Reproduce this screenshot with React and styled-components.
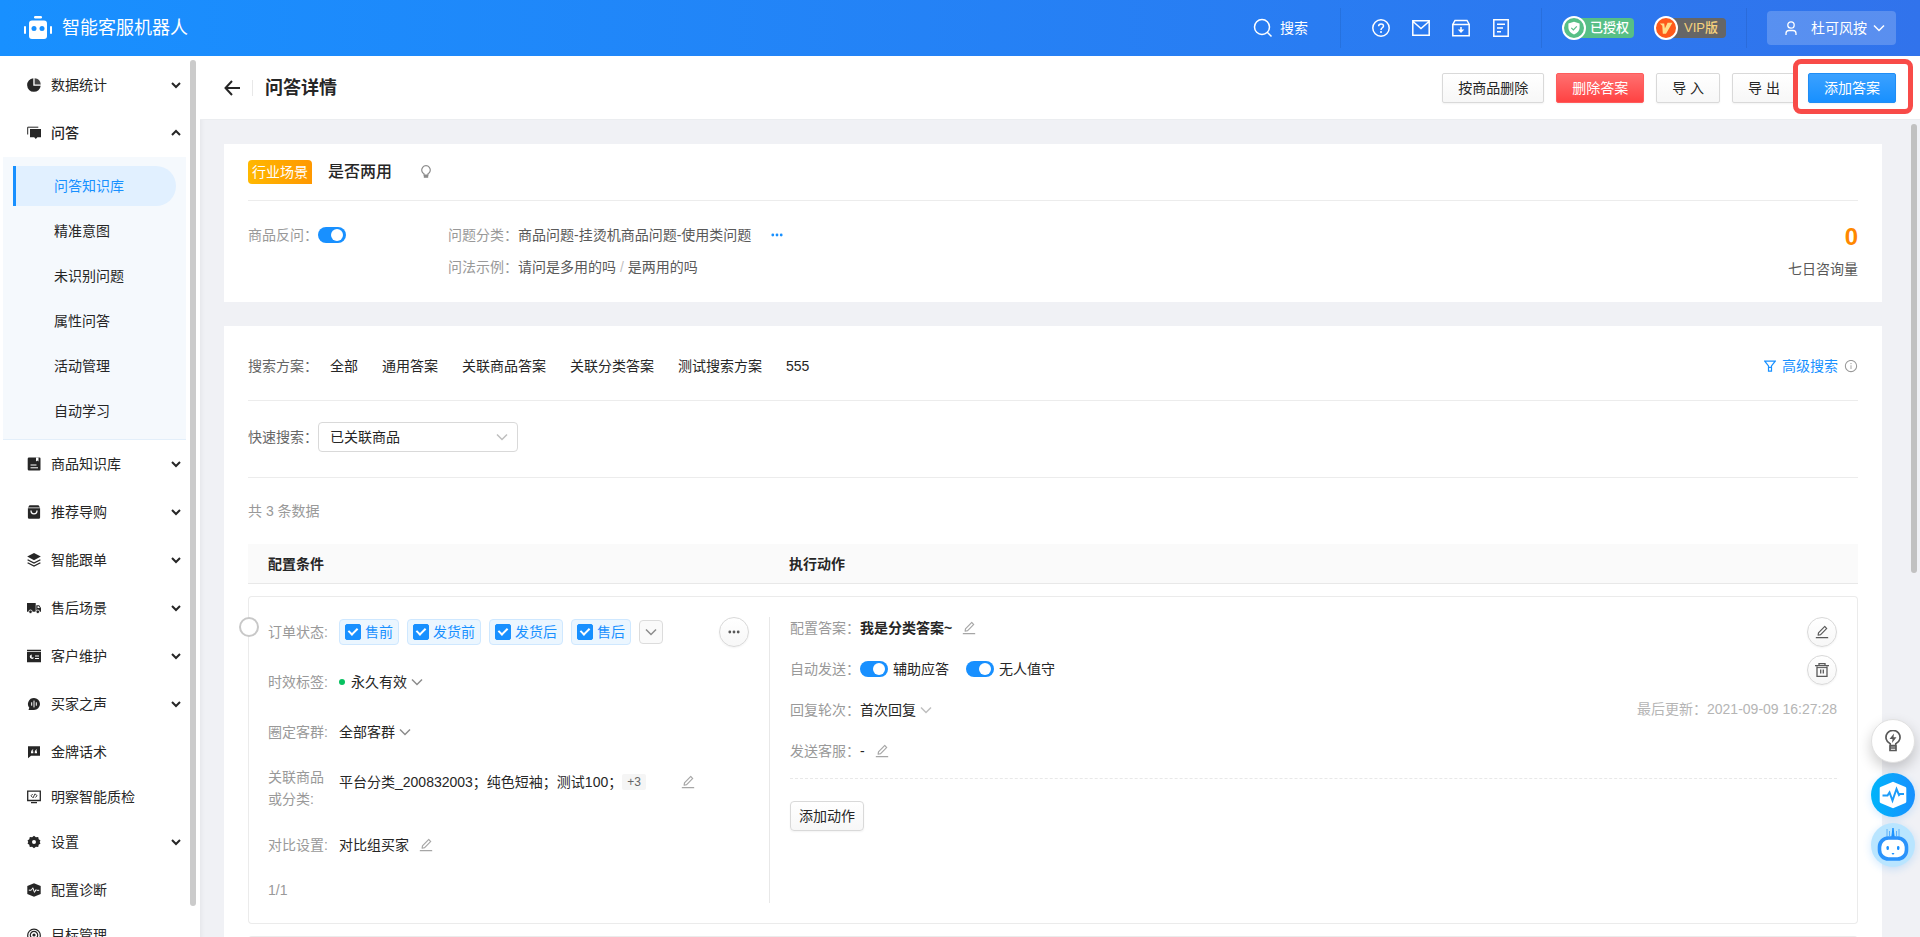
import { useState } from "react";
import styled, { createGlobalStyle } from "styled-components";
import { AiOutlineEdit, AiOutlineInfoCircle } from "react-icons/ai";

const GlobalStyle = createGlobalStyle`
  *, *::before, *::after {
    box-sizing: border-box;
  }

  body {
    margin: 0;
    color: #262626;
    font-family: "Liberation Sans", "Noto Sans CJK SC", sans-serif;
    font-size: 14px;
    line-height: 22px;
  }

  button, input, select {
    margin: 0;
    font: inherit;
    color: inherit;
  }

  svg {
    display: block;
    flex: none;
  }
`;

/* ---------- layout ---------- */

const Page = styled.div`
  height: 100vh;
  display: flex;
  flex-direction: column;
  overflow: hidden;
`;

const Body = styled.div`
  flex: 1;
  min-height: 0;
  display: flex;
`;

const Main = styled.main`
  flex: 1;
  min-width: 0;
  display: flex;
  flex-direction: column;
  background: #f0f1f5;
`;

const Scroller = styled.div`
  position: relative;
  flex: 1;
  min-height: 0;
  overflow: hidden;
  padding: 24px 38px 0 24px;
  box-shadow: inset 5px 0 5px -4px rgba(0, 0, 0, 0.06);
`;

const ScrollThumb = styled.div`
  position: absolute;
  top: 4px;
  right: ${({ $right }) => $right}px;
  width: 6px;
  height: ${({ $size }) => $size}%;
  border-radius: 3px;
  background: ${({ $color }) => $color};
`;

/* ---------- top bar ---------- */

const TopBar = styled.header`
  flex: none;
  height: 56px;
  display: flex;
  align-items: center;
  padding: 0 24px;
  color: #fff;
  background: linear-gradient(90deg, #1890ff, #3173ec);
`;

const Brand = styled.div`
  flex: 1;
  display: flex;
  align-items: center;
  gap: 10px;
  font-size: 18px;
`;

const BarButton = styled.button`
  display: flex;
  align-items: center;
  padding: 0;
  border: 0;
  background: none;
`;

const SearchButton = styled(BarButton)`
  gap: 7px;
  margin-right: 32px;
`;

const BarDivider = styled.span`
  width: 1px;
  height: 40px;
  background: rgba(0, 0, 0, 0.08);
`;

const BarIcons = styled.div`
  display: flex;
  gap: 22px;
  margin: 0 31px;
`;

const Badges = styled.div`
  display: flex;
  gap: 20px;
  margin: 0 20px;
`;

const Badge = styled.span`
  display: flex;
  align-items: center;
`;

const BadgeMark = styled.span`
  position: relative;
  display: flex;
  align-items: center;
  justify-content: center;
  width: 24px;
  height: 24px;
  border: 2px solid #fff;
  border-radius: 50%;
  background: ${({ $color }) => $color};
`;

const BadgeText = styled.span`
  margin-left: -12px;
  padding: 0 ${({ $vip }) => ($vip ? 8 : 5)}px 0 ${({ $vip }) => ($vip ? 18 : 16)}px;
  border-radius: 4px;
  font-size: 13px;
  font-weight: 500;
  line-height: 20px;
  color: ${({ $vip }) => ($vip ? "#f6d27c" : "#fff")};
  background: ${({ $vip }) => ($vip ? "#666" : "#57bf86")};
`;

const UserButton = styled.button`
  display: flex;
  align-items: center;
  height: 34px;
  padding: 0 11px 0 17px;
  margin-left: 20px;
  border: 0;
  border-radius: 4px;
  background: rgba(255, 255, 255, 0.2);

  span {
    margin: 0 6px 0 13px;
  }
`;

/* ---------- sidebar ---------- */

const Sidebar = styled.nav`
  position: relative;
  flex: none;
  width: 200px;
  padding: 5px 14px 0 3px;
  overflow: hidden;
  background: #fff;
`;

const MenuItem = styled.a`
  display: flex;
  align-items: center;
  height: ${({ $short }) => ($short ? 42 : 48)}px;
  padding: 0 5px 0 24px;
  color: #262626;
  font-weight: ${({ $open }) => ($open ? 500 : 400)};
  text-decoration: none;

  span {
    flex: 1;
    margin-left: 10px;
  }
`;

const SubMenu = styled.div`
  display: flex;
  flex-direction: column;
  gap: 5px;
  padding: 9px 10px 8px;
  border-bottom: 1px solid #e3effa;
  background: #f5f9fd;
`;

const SubItem = styled.a`
  padding-left: 38px;
  border-left: 3px solid ${({ $active }) => ($active ? "#1890ff" : "transparent")};
  border-radius: 0 20px 20px 0;
  line-height: 40px;
  color: ${({ $active }) => ($active ? "#1890ff" : "#262626")};
  background: ${({ $active }) => ($active ? "#e1f0ff" : "none")};
  text-decoration: none;
`;

/* ---------- page head ---------- */

const PageHead = styled.div`
  flex: none;
  display: flex;
  align-items: center;
  height: 64px;
  padding: 0 24px;
  border-bottom: 1px solid #ebedf0;
  background: #fff;
`;

const BackButton = styled.button`
  display: flex;
  padding: 0 12px 0 0;
  border: 0;
  border-right: 1px solid #e8e8e8;
  background: none;
`;

const Title = styled.h1`
  flex: 1;
  margin: 0 0 0 12px;
  font-size: 18px;
  font-weight: 600;
`;

const Actions = styled.div`
  display: flex;
  gap: 12px;
`;

const BUTTONS = {
  plain: { border: "#d9d9d9", text: "#262626", fill: "linear-gradient(#fff, #f7f7f7)" },
  danger: { border: "#ff5c5c", text: "#fff", fill: "linear-gradient(#ff7070, #ff4242)" },
  primary: { border: "#1f8df5", text: "#fff", fill: "linear-gradient(#3ba1ff, #1890ff)" },
};

const Button = styled.button`
  position: relative;
  height: 30px;
  padding: 0 ${({ $small }) => ($small ? 8 : 15)}px;
  border: 1px solid ${({ $kind = "plain" }) => BUTTONS[$kind].border};
  border-radius: ${({ $small }) => ($small ? 4 : 2)}px;
  color: ${({ $kind = "plain" }) => BUTTONS[$kind].text};
  background: ${({ $kind = "plain" }) => BUTTONS[$kind].fill};
  box-shadow: 0 1px 2px rgba(0, 0, 0, 0.05);
  line-height: 20px;
`;

const Highlight = styled.div`
  position: relative;

  &::before {
    content: "";
    position: absolute;
    inset: -14px -17px -11px -15px;
    border: 5px solid #f84b48;
    border-radius: 8px;
    background: #fff;
  }
`;

/* ---------- cards ---------- */

const Card = styled.section`
  padding: 0 24px;
  margin-bottom: 24px;
  background: #fff;
`;

const CardRow = styled.div`
  display: flex;
  align-items: center;
  height: ${({ $height }) => $height}px;
  padding: ${({ $pad = "0" }) => $pad};
  border-bottom: 1px solid #ececec;
`;

const SceneTag = styled.span`
  padding: 0 4px;
  margin-right: 16px;
  border-radius: 4px 4px 0 4px;
  line-height: 24px;
  color: #fff;
  background: linear-gradient(90deg, #ffb800, #ff9800);
`;

const Question = styled.h2`
  margin: 0 27px 0 0;
  font-size: 16px;
  font-weight: 500;
`;

const Summary = styled.div`
  display: flex;
  height: 101px;
  padding-top: 23px;
  color: #595959;
`;

const SwitchField = styled.label`
  display: flex;
  align-items: center;
  gap: ${({ $gap = 0 }) => $gap}px;
  height: 22px;
`;

const SwitchInput = styled.input`
  position: relative;
  appearance: none;
  width: 28px;
  height: 16px;
  border-radius: 8px;
  background: #bfbfbf;

  &:checked {
    background: #1890ff;
  }

  &::after {
    content: "";
    position: absolute;
    top: 2px;
    left: 2px;
    width: 12px;
    height: 12px;
    border-radius: 50%;
    background: #fff;
  }

  &:checked::after {
    left: 13px;
  }
`;

const Facts = styled.dl`
  flex: 1;
  display: grid;
  grid-template-columns: 70px 1fr;
  align-content: start;
  row-gap: 10px;
  margin: 0 0 0 102px;

  dt {
    color: #999;
  }

  dd {
    display: flex;
    align-items: center;
    gap: 20px;
    margin: 0;
  }

  i {
    color: #bfbfbf;
    font-style: normal;
  }
`;

const Muted = styled.span`
  color: #999;
`;

const Stat = styled.div`
  display: flex;
  flex-direction: column;
  gap: 8px;
  text-align: right;

  strong {
    color: #ff8800;
    font-size: 24px;
    line-height: 26px;
  }
`;

const LinkButton = styled.button`
  display: flex;
  align-items: center;
  gap: 6px;
  padding: 0;
  border: 0;
  background: none;
  color: ${({ $color = "#1890ff" }) => $color};
`;

const Plans = styled.div`
  flex: 1;
  display: flex;
  gap: 24px;
  margin-left: 12px;
`;

const FieldLabel = styled.label`
  color: #666;
`;

const SelectBox = styled.span`
  position: relative;
  display: inline-flex;
  align-items: center;
  justify-self: start;
  color: ${({ $faint }) => ($faint ? "#bfbfbf" : "#8c8c8c")};

  select {
    appearance: none;
    width: ${({ $boxed }) => ($boxed ? "200px" : "auto")};
    height: ${({ $boxed }) => ($boxed ? 30 : 22)}px;
    padding: 0 ${({ $boxed }) => ($boxed ? "24px 0 11px" : "16px 0 0")};
    border: ${({ $boxed }) => ($boxed ? "1px solid #d9d9d9" : "0")};
    border-radius: 4px;
    background: none;
    color: #262626;
  }

  svg {
    position: absolute;
    right: ${({ $boxed }) => ($boxed ? 10 : 0)}px;
    pointer-events: none;
  }
`;

const Count = styled.div`
  padding: 22px 0 10px;
  color: #999;
`;

/* ---------- answers table ---------- */

const Table = styled.table`
  width: 100%;
  table-layout: fixed;
  border-collapse: separate;
  border-spacing: 0 12px;

  th {
    height: 40px;
    padding: 0 20px;
    border-bottom: 1px solid #e8e8e8;
    background: #fafafa;
    font-weight: 600;
    text-align: left;
  }

  th:first-child {
    width: 521px;
  }

  td {
    position: relative;
    height: 328px;
    padding: 20px 20px 20px 0;
    border: 1px solid #ebebeb;
    vertical-align: top;
  }

  td:first-child {
    padding: 10px 20px 0 19px;
    border-right: 0;
    border-radius: 4px 0 0 4px;
  }

  td:last-child {
    border-left: 0;
    border-radius: 0 4px 4px 0;
  }
`;

const RowRadio = styled.input`
  position: absolute;
  top: 20px;
  left: -10px;
  appearance: none;
  width: 20px;
  height: 20px;
  border: 2px solid #c8c8c8;
  border-radius: 50%;
  background: #fff;
`;

const Condition = styled.div`
  display: flex;
  align-items: ${({ $tall }) => ($tall ? "flex-start" : "center")};
  min-height: 50px;
  padding: ${({ $tall }) => ($tall ? "9px 0 10px" : "0")};
`;

const ConditionLabel = styled.span`
  flex: none;
  width: 71px;
  padding-right: 10px;
  color: #999;
`;

const Chips = styled.div`
  flex: 1;
  display: flex;
  align-items: center;
  gap: 8px;
`;

const Chip = styled.label`
  display: flex;
  align-items: center;
  gap: 4px;
  height: 26px;
  padding: 0 5px;
  border: 1px solid #cfe8ff;
  border-radius: 4px;
  background: #ebf6ff;
  color: #1890ff;
`;

const Checkbox = styled.input`
  position: relative;
  appearance: none;
  width: 16px;
  height: 16px;
  border: 1px solid #1890ff;
  border-radius: 2px;
  background: #fff;

  &:checked {
    background: #1890ff;
  }

  &:checked::after {
    content: "";
    position: absolute;
    top: 1px;
    left: 4px;
    width: 6px;
    height: 9px;
    border: solid #fff;
    border-width: 0 2px 2px 0;
    transform: rotate(45deg);
  }
`;

const MoreChips = styled.button`
  display: flex;
  align-items: center;
  justify-content: center;
  width: 24px;
  height: 24px;
  padding: 0;
  border: 1px solid #dcdcdc;
  border-radius: 4px;
  background: #fafafa;
  color: #8c8c8c;
`;

const RoundButton = styled.button`
  display: flex;
  align-items: center;
  justify-content: center;
  width: 30px;
  height: 30px;
  padding: 0;
  border: 1px solid #d9d9d9;
  border-radius: 50%;
  background: linear-gradient(#fff, #f7f7f7);
  box-shadow: 0 1px 2px rgba(0, 0, 0, 0.05);
  color: #595959;
`;

const Dot = styled.span`
  width: 6px;
  height: 6px;
  margin-right: 6px;
  border-radius: 50%;
  background: #07c160;
`;

const Products = styled.div`
  display: flex;
  align-items: center;
  height: 32px;
`;

const MoreTag = styled.span`
  padding: 0 5px;
  margin-right: 34px;
  border-radius: 2px;
  background: #f5f5f5;
  color: #666;
  font-size: 12px;
  line-height: 16px;
`;

const PageCount = styled.div`
  padding-top: 9px;
  color: #999;
`;

const ActionPanel = styled.div`
  min-height: 286px;
  padding-left: 20px;
  border-left: 1px solid #e8e8e8;
`;

const ActionTop = styled.div`
  display: flex;
  justify-content: space-between;
  border-bottom: 1px dashed #e8e8e8;
`;

const ActionRows = styled.div`
  display: grid;
  grid-template-columns: 70px auto;
  grid-auto-rows: 22px;
  row-gap: 19px;
  align-items: center;
  padding-bottom: 16px;
`;

const ActionValue = styled.div`
  display: flex;
  align-items: center;
  gap: ${({ $gap = 9 }) => $gap}px;
`;

const AnswerText = styled.strong`
  font-weight: 600;
`;

const Tools = styled.div`
  display: flex;
  flex-direction: column;
  align-items: flex-end;
  gap: 8px;
`;

const Updated = styled.time`
  margin-top: 5px;
  color: #b5b5b5;
`;

const AddRow = styled.div`
  padding-top: 22px;
`;

/* ---------- floating buttons ---------- */

const Floating = styled.div`
  position: fixed;
  right: 5px;
  bottom: 70px;
  display: flex;
  flex-direction: column;
  gap: 6px;
`;

const FloatButton = styled.button`
  display: flex;
  align-items: center;
  justify-content: center;
  width: 44px;
  height: 44px;
  padding: 0;
  border: ${({ $tone }) => ($tone === "white" ? "1px solid #e0e0e0" : "0")};
  border-radius: 50%;
  margin-bottom: ${({ $tone }) => ($tone === "white" ? 4 : 0)}px;
  background: ${({ $tone }) =>
    ({ white: "#fff", blue: "linear-gradient(90deg, #00b4fa, #1890ff)", pale: "#b9e5ff" })[$tone]};
  box-shadow: ${({ $tone }) =>
    $tone === "white" ? "0 6px 14px rgba(0, 0, 0, 0.2)" : "0 2px 8px rgba(24, 144, 255, 0.2)"};
  color: #595959;
`;

/* ---------- drawings ---------- */

const Glyph = ({ size = 14, children }) => (
  <svg width={size} height={size} viewBox={`0 0 ${size} ${size}`} fill="currentColor" aria-hidden="true">
    {children}
  </svg>
);

const Line = ({ d, width = 1.4, stroke = "currentColor" }) => (
  <path d={d} fill="none" stroke={stroke} strokeWidth={width} />
);

const Logo = () => (
  <svg width="28" height="24" viewBox="0 0 28 24" fill="#fff" aria-hidden="true">
    <rect x="10" y="0" width="8" height="2.4" rx="1.2" />
    <rect x="5" y="4.5" width="18" height="18.5" rx="3" />
    <rect x="0" y="10" width="2" height="8" rx="1" />
    <rect x="26" y="10" width="2" height="8" rx="1" />
    <circle cx="10" cy="12.5" r="2.5" fill="#1890ff" />
    <circle cx="18" cy="12.5" r="2.5" fill="#1890ff" />
  </svg>
);

const MENU_ICONS = {
  pie: (
    <>
      <path d="M6.3.3A6.8 6.8 0 1 0 13.7 7.7H6.3z" />
      <path d="M7.6.2v6.2h6.2A6.8 6.8 0 0 0 7.6.2z" opacity=".85" />
    </>
  ),
  chat: (
    <>
      <Line d="M.7 8.5V1.2h10.6" width={1} />
      <path d="M3 3h11v8.3h-3.6L8.8 13l-1.6-1.7H3z" />
    </>
  ),
  book: (
    <>
      <path d="M2 .5h10.5a1 1 0 0 1 1 1v11a1 1 0 0 1-1 1H2A1.3 1.3 0 0 1 .7 12.2V1.8A1.3 1.3 0 0 1 2 .5z" />
      <path d="M9 .5h2.5v4l-1.2-1-1.3 1z" fill="#fff" />
      <Line d="M3.5 8h6M3.5 10.8H11" stroke="#fff" width={1} />
    </>
  ),
  bag: (
    <>
      <path d="M2.5.3h9L13 2.4H1z" />
      <path d="M.9 3.2h12.2v9.3a1.3 1.3 0 0 1-1.3 1.3H2.2a1.3 1.3 0 0 1-1.3-1.3z" />
      <Line d="M4 5.5a3 3.3 0 0 0 6 0" stroke="#fff" width={1.3} />
    </>
  ),
  layers: (
    <>
      <path d="M7 0l6.8 3.6L7 7.2.2 3.6z" />
      <Line d="M.6 6.7L7 10.1l6.4-3.4M.6 9.7L7 13.1l6.4-3.4" width={1.3} />
    </>
  ),
  truck: (
    <>
      <path d="M0 2h8.7v8.7H0zM9.3 4.2h2.9L14 7v3.7H9.3z" />
      <circle cx="3.5" cy="10.8" r="1.8" stroke="#fff" strokeWidth=".8" />
      <circle cx="10.8" cy="10.8" r="1.8" stroke="#fff" strokeWidth=".8" />
      <path d="M10.5 5.3h1.3l1.1 1.8h-2.4z" fill="#fff" />
    </>
  ),
  card: (
    <>
      <path d="M0 .8h14v1.4H0zM0 3h14v10.2H0z" />
      <path d="M4.700 5.500a2.200 2.200 0 1 0 2.300 3H4.700z" fill="#fff" />
      <Line d="M8 7h4M8 9.500h4" stroke="#fff" width={1} />
    </>
  ),
  voice: (
    <>
      <path d="M7 1a6 6 0 1 1 0 12H1.5l.8-2.200A6 6 0 0 1 7 1z" />
      <Line d="M4.700 5.300v3.400M7 3.600v6.800M9.300 5.300v3.400" stroke="#fff" width={1} />
    </>
  ),
  quote: (
    <>
      <path d="M1 1.200h12v9.600H4L1 13.200z" />
      <path
        d="M4 7.800c0-2 .7-3 2.200-3.500v1c-.6.3-.8.6-.8.9h.9v2H4zM7.700 7.800c0-2 .7-3 2.200-3.500v1c-.6.3-.8.6-.8.9h.9v2H7.700z"
        fill="#fff"
      />
    </>
  ),
  screen: (
    <>
      <Line d="M.7 1.200h12.600v9.300H.7zM4 12.600h6" width={1.3} />
      <Line d="M5.700 4L4 5.800l1.700 1.800M8.300 4L10 5.800 8.300 7.600M8 3.700L6 8" width={0.9} />
    </>
  ),
  gear: (
    <path
      fillRule="evenodd"
      d="M7 .8l1.900 1.400 2.300-.3.5 2.300L13.500 5.600 12.700 7l.8 1.500-1.800 1.300-.5 2.300-2.300-.3L7 13.200l-1.900-1.400-2.300.3-.5-2.300L.5 8.500 1.300 7 .5 5.600l1.800-1.400.5-2.300 2.300.3zM7 5a2 2 0 1 0 0 4 2 2 0 0 0 0-4z"
    />
  ),
  pulse: (
    <>
      <path d="M7 .2l6.700 2.800v8L7 13.800.3 11V3z" />
      <Line d="M1.800 7.200h2.500l1.500-2.400 1.700 4.600 1.500-2.800.7.700h2.500" stroke="#fff" width={1} />
    </>
  ),
  target: (
    <>
      <Line d="M3 12.300a6.300 6.300 0 1 1 8 0M4.400 9.700a3.700 3.700 0 1 1 5.200 0" width={1.2} />
      <circle cx="7" cy="7" r="1.6" />
      <path d="M6 9h2l.6 5H5.400z" />
    </>
  ),
};

const Caret = ({ up }) => (
  <Glyph size={10}>
    <Line d={up ? "M1 7l4-4 4 4" : "M1 3l4 4 4-4"} width={2} />
  </Glyph>
);

const Chevron = () => (
  <Glyph size={12}>
    <Line d="M1 3.500l5 5 5-5" width={1.500} />
  </Glyph>
);

const Dots = () => (
  <Glyph size={12}>
    <circle cx="1.8" cy="6" r="1.400" />
    <circle cx="6" cy="6" r="1.400" />
    <circle cx="10.200" cy="6" r="1.400" />
  </Glyph>
);

const Bulb = () => (
  <Glyph>
    <Line d="M5 10V8.800A4.300 4.300 0 1 1 9 8.800V10z" width={1.200} />
    <path d="M4.800 10h4.400v2.800H4.800z" />
  </Glyph>
);

const Trash = () => (
  <Glyph>
    <Line d="M0 2.700h14M4 2.500V.7h6v1.800M2 3.500v9.800h10V3.500M5.700 6.500v4M8.300 6.500v4" width={1.300} />
    <Line d="M2 4.600h10" width={1} />
  </Glyph>
);

/* ---------- data ---------- */

const SUB_ITEMS = ["问答知识库", "精准意图", "未识别问题", "属性问答", "活动管理", "自动学习"];

const MENU = [
  { text: "数据统计", icon: "pie", caret: true },
  { text: "问答", icon: "chat", caret: true, items: SUB_ITEMS },
  { text: "商品知识库", icon: "book", caret: true },
  { text: "推荐导购", icon: "bag", caret: true },
  { text: "智能跟单", icon: "layers", caret: true },
  { text: "售后场景", icon: "truck", caret: true },
  { text: "客户维护", icon: "card", caret: true },
  { text: "买家之声", icon: "voice", caret: true },
  { text: "金牌话术", icon: "quote" },
  { text: "明察智能质检", icon: "screen", short: true },
  { text: "设置", icon: "gear", caret: true },
  { text: "配置诊断", icon: "pulse" },
  { text: "目标管理", icon: "target", short: true },
];

const PLANS = ["全部", "通用答案", "关联商品答案", "关联分类答案", "测试搜索方案", "555"];
const ORDER_STATES = ["售前", "发货前", "发货后", "售后"];

/* ---------- parts ---------- */

const Switch = ({ label, after, gap }) => {
  const [on, setOn] = useState(true);

  return (
    <SwitchField $gap={gap}>
      {!after && <Muted>{label}</Muted>}
      <SwitchInput type="checkbox" role="switch" checked={on} onChange={() => setOn(!on)} />
      {after && label}
    </SwitchField>
  );
};

const Select = ({ id, label, value, boxed, faint }) => (
  <SelectBox $boxed={boxed} $faint={faint}>
    <select id={id} aria-label={label}>
      <option>{value}</option>
    </select>
    <Chevron />
  </SelectBox>
);

const EditLink = () => (
  <LinkButton $color="#a6a6a6" aria-label="编辑">
    <AiOutlineEdit size={16} />
  </LinkButton>
);

const Header = () => (
  <TopBar>
    <Brand>
      <Logo />
      智能客服机器人
    </Brand>
    <SearchButton>
      <Glyph size={20}>
        <Line d="M9 1.500a7.500 7.500 0 1 1 0 15 7.500 7.500 0 0 1 0-15zM14.500 14.500l4 4" width={1.500} />
      </Glyph>
      搜索
    </SearchButton>
    <BarDivider />
    <BarIcons>
      <BarButton aria-label="帮助">
        <Glyph size={18}>
          <Line
            d="M9 .8a8.200 8.200 0 1 1 0 16.400A8.200 8.200 0 0 1 9 .8zM6.600 7.200c0-3 4.900-3 4.900-.2 0 1.800-2.500 1.800-2.500 4"
            width={1.500}
          />
          <circle cx="9" cy="12.900" r="1" />
        </Glyph>
      </BarButton>
      <BarButton aria-label="消息">
        <Glyph size={18}>
          <Line d="M.8 1.800h16.400v14.400H.8zM1 2.500l8 7 8-7" width={1.500} />
        </Glyph>
      </BarButton>
      <BarButton aria-label="下载">
        <Glyph size={18}>
          <Line d="M.8 5.500h16.400v11.200H.8zM1 5L3 1.500h12L17 5M9 8v5" width={1.500} />
          <path d="M5.700 10.500h6.600L9 14z" />
        </Glyph>
      </BarButton>
      <BarButton aria-label="文档">
        <Glyph size={18}>
          <Line d="M1.800.8h14.400v16.400H1.800zM5 5.200h8M5 9h6M5 12.800h4" width={1.500} />
        </Glyph>
      </BarButton>
    </BarIcons>
    <BarDivider />
    <Badges>
      <Badge>
        <BadgeMark $color="#57bf86">
          <Glyph>
            <path d="M7 .8l5.600 1.700v4.300c0 3-2.200 5.200-5.600 6.600-3.400-1.400-5.600-3.600-5.600-6.600V2.500z" />
            <Line d="M4.300 6.800l2.100 2.100 3.400-3.500" stroke="#57bf86" width={1.200} />
          </Glyph>
        </BadgeMark>
        <BadgeText>已授权</BadgeText>
      </Badge>
      <Badge>
        <BadgeMark $color="#ff5a1a">
          <svg width="14" height="14" viewBox="0 0 14 14" fill="#ffdf8a" aria-hidden="true">
            <path d="M.8 2.500h4.400L5.900 7.600 8.600 1.800h4.800L7 12.800H3.800L3.300 4.800z" />
          </svg>
        </BadgeMark>
        <BadgeText $vip>VIP版</BadgeText>
      </Badge>
    </Badges>
    <BarDivider />
    <UserButton>
      <Glyph>
        <Line
          d="M7 .8a3.200 3.200 0 1 1 0 6.400A3.200 3.200 0 0 1 7 .8zM2 14v-1.500a3 3 0 0 1 3-3h4a3 3 0 0 1 3 3V14"
          width={1.300}
        />
      </Glyph>
      <span>杜可风按</span>
      <Chevron />
    </UserButton>
  </TopBar>
);

const Menu = () => (
  <Sidebar>
    {MENU.map(({ text, icon, caret, items, short }) => (
      <div key={text}>
        <MenuItem href="#" $short={short} $open={!!items}>
          <Glyph>{MENU_ICONS[icon]}</Glyph>
          <span>{text}</span>
          {caret && <Caret up={!!items} />}
        </MenuItem>
        {items && (
          <SubMenu>
            {items.map((item, i) => (
              <SubItem key={item} href="#" $active={i === 0}>
                {item}
              </SubItem>
            ))}
          </SubMenu>
        )}
      </div>
    ))}
    <ScrollThumb $right={4} $size={96} $color="#cbcbcb" />
  </Sidebar>
);

const Conditions = () => (
  <>
    <Condition>
      <ConditionLabel>订单状态:</ConditionLabel>
      <Chips>
        {ORDER_STATES.map((state) => (
          <Chip key={state}>
            <Checkbox type="checkbox" defaultChecked />
            {state}
          </Chip>
        ))}
        <MoreChips aria-label="展开">
          <Chevron />
        </MoreChips>
      </Chips>
      <RoundButton aria-label="更多">
        <Dots />
      </RoundButton>
    </Condition>
    <Condition>
      <ConditionLabel>时效标签:</ConditionLabel>
      <Dot />
      <Select label="时效标签" value="永久有效" />
    </Condition>
    <Condition>
      <ConditionLabel>圈定客群:</ConditionLabel>
      <Select label="圈定客群" value="全部客群" />
    </Condition>
    <Condition $tall>
      <ConditionLabel>关联商品或分类:</ConditionLabel>
      <Products>
        平台分类_200832003；纯色短袖；测试100；
        <MoreTag>+3</MoreTag>
        <EditLink />
      </Products>
    </Condition>
    <Condition>
      <ConditionLabel>对比设置:</ConditionLabel>
      <ActionValue>
        对比组买家
        <EditLink />
      </ActionValue>
    </Condition>
    <PageCount>1/1</PageCount>
  </>
);

const AnswerActions = () => (
  <ActionPanel>
    <ActionTop>
      <ActionRows>
        <Muted>配置答案：</Muted>
        <ActionValue>
          <AnswerText>我是分类答案~</AnswerText>
          <EditLink />
        </ActionValue>
        <Muted>自动发送：</Muted>
        <ActionValue $gap={17}>
          <Switch label="辅助应答" after gap={5} />
          <Switch label="无人值守" after gap={5} />
        </ActionValue>
        <Muted>回复轮次：</Muted>
        <Select label="回复轮次" value="首次回复" faint />
        <Muted>发送客服：</Muted>
        <ActionValue>
          -
          <EditLink />
        </ActionValue>
      </ActionRows>
      <Tools>
        <RoundButton aria-label="编辑答案">
          <AiOutlineEdit size={16} />
        </RoundButton>
        <RoundButton aria-label="删除答案">
          <Trash />
        </RoundButton>
        <Updated>最后更新：2021-09-09 16:27:28</Updated>
      </Tools>
    </ActionTop>
    <AddRow>
      <Button $small>添加动作</Button>
    </AddRow>
  </ActionPanel>
);

const App = () => (
  <Page>
    <GlobalStyle />
    <Header />
    <Body>
      <Menu />
      <Main>
        <PageHead>
          <BackButton aria-label="返回">
            <Glyph size={16}>
              <Line d="M8 1L1.500 8 8 15M1.500 8H16" width={2} />
            </Glyph>
          </BackButton>
          <Title>问答详情</Title>
          <Actions>
            <Button>按商品删除</Button>
            <Button $kind="danger">删除答案</Button>
            <Button>导 入</Button>
            <Button>导 出</Button>
            <Highlight>
              <Button $kind="primary">添加答案</Button>
            </Highlight>
          </Actions>
        </PageHead>
        <Scroller>
          <Card>
            <CardRow $height={57}>
              <SceneTag>行业场景</SceneTag>
              <Question>是否两用</Question>
              <LinkButton $color="#8c8c8c" aria-label="提示">
                <Bulb />
              </LinkButton>
            </CardRow>
            <Summary>
              <Switch label="商品反问：" />
              <Facts>
                <dt>问题分类：</dt>
                <dd>
                  商品问题-挂烫机商品问题-使用类问题
                  <LinkButton aria-label="更多">
                    <Dots />
                  </LinkButton>
                </dd>
                <dt>问法示例：</dt>
                <dd>
                  <span>
                    请问是多用的吗 <i>/</i> 是两用的吗
                  </span>
                </dd>
              </Facts>
              <Stat>
                <strong>0</strong>
                <span>七日咨询量</span>
              </Stat>
            </Summary>
          </Card>
          <Card>
            <CardRow $height={75} $pad="6px 0 0">
              <FieldLabel as="span">搜索方案：</FieldLabel>
              <Plans>
                {PLANS.map((plan) => (
                  <LinkButton key={plan} $color="#262626">
                    {plan}
                  </LinkButton>
                ))}
              </Plans>
              <LinkButton>
                <Glyph size={12}>
                  <Line d="M.8 1.200h10.400L7.500 6v5.200h-3V6zM4.500 7.300h3" width={1.200} />
                </Glyph>
                高级搜索
                <Muted>
                  <AiOutlineInfoCircle size={14} />
                </Muted>
              </LinkButton>
            </CardRow>
            <CardRow $height={77} $pad="0 0 4px">
              <FieldLabel htmlFor="quick-search">快速搜索：</FieldLabel>
              <Select id="quick-search" value="已关联商品" boxed faint />
            </CardRow>
            <Count>共 3 条数据</Count>
            <Table>
              <thead>
                <tr>
                  <th>配置条件</th>
                  <th>执行动作</th>
                </tr>
              </thead>
              <tbody>
                <tr>
                  <td>
                    <RowRadio type="radio" name="answer" aria-label="选择答案" />
                    <Conditions />
                  </td>
                  <td>
                    <AnswerActions />
                  </td>
                </tr>
                <tr>
                  <td />
                  <td />
                </tr>
              </tbody>
            </Table>
          </Card>
          <ScrollThumb $right={3} $size={55} $color="#c1c1c1" />
        </Scroller>
      </Main>
    </Body>
    <Floating>
      <FloatButton $tone="white" aria-label="灵感">
        <Glyph size={22}>
          <Line d="M8.200 15.500v-1.700a7 7 0 1 1 5.600 0v1.700zM8 16h6v4.500H8zM8 18h6" width={1.700} />
          <path d="M12 3.500L7.500 9h3L10 13l4.500-5.700h-3z" />
        </Glyph>
      </FloatButton>
      <FloatButton $tone="blue" aria-label="诊断">
        <svg width="28" height="28" viewBox="0 0 28 28" aria-hidden="true">
          <path
            d="M14 .8L26.500 6a1.500 1.500 0 0 1 .8 1.400v13.200a1.500 1.500 0 0 1-.8 1.400L14 27.200 1.500 22a1.500 1.500 0 0 1-.8-1.400V7.400A1.500 1.500 0 0 1 1.500 6z"
            fill="#fff"
          />
          <Line d="M3.500 14.500h5l2-3 3 8 4-11.500 2.500 6 1-1h4" width={2} stroke="#1c9cf9" />
        </svg>
      </FloatButton>
      <FloatButton $tone="pale" aria-label="机器人助手">
        <svg width="32" height="34" viewBox="0 0 32 34" aria-hidden="true">
          <path d="M10 1v8M12.500 3v5M19.500 3v5M22 1v8" stroke="#5bb0fb" strokeWidth="1" />
          <path d="M16 0l1.200 9h-2.400z" fill="#1890ff" stroke="#1890ff" />
          <rect x="2.500" y="10" width="27" height="21" rx="9" fill="#fff" stroke="#2b93fb" strokeWidth="3.600" />
          <rect x="9.500" y="18" width="2.400" height="4" rx="1.200" fill="#1890ff" />
          <rect x="20" y="18" width="2.400" height="4" rx="1.200" fill="#1890ff" />
          <path d="M14.500 25h3l-1.500 2z" fill="#1890ff" />
        </svg>
      </FloatButton>
    </Floating>
  </Page>
);

export default App;
